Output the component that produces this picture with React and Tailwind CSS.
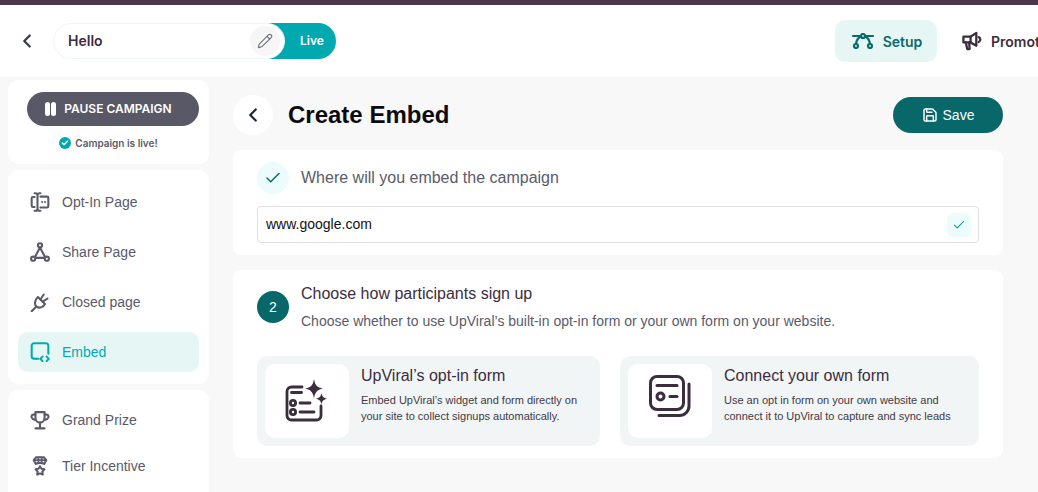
import React from "react";
import { ChevronLeft, Pencil, Save, Check } from "lucide-react";

const arial = "[font-family:'Liberation_Sans',Arial,sans-serif]";

const S = ({ children, size = 20, className = "" }) => (
  <svg width={size} height={size} viewBox="0 0 24 24" fill="none" stroke="currentColor" strokeWidth="2.500" strokeLinecap="round" strokeLinejoin="round" className={className}>
    {children}
  </svg>
);

const OptIn = () => (
  <S>
    <path d="M5.500 6H3.500A1.500 1.500 0 0 0 2 7.500v9A1.500 1.500 0 0 0 3.500 18h2" />
    <path d="M12.500 5.500h8A1.500 1.500 0 0 1 22 7v10a1.500 1.500 0 0 1-1.500 1.500h-8" />
    <path d="M5.500 1.500h1a2.500 2.500 0 0 1 2.500 2.500v16a2.500 2.500 0 0 1-2.500 2.500h-1M12.500 1.500h-1A2.500 2.500 0 0 0 9 4M12.500 22.500h-1A2.500 2.500 0 0 1 9 20" />
    <path d="M14.500 12h.01M18 12h.01" />
  </S>
);
const Share = () => (
  <S>
    <circle cx="12" cy="4" r="2.500" />
    <circle cx="3.800" cy="20" r="2.500" />
    <circle cx="20.200" cy="20" r="2.500" />
    <path d="M12 6.500 6 18M12 6.500 18 18M6.300 19h11.400" />
  </S>
);
const Plug = () => (
  <S>
    <path d="M2 23l4.500-4.500" />
    <path d="M9.500 6 18 14.500c-1.500 3-6 5.500-9.500 3.500C5 16 5 10 9.500 6Z" />
    <path d="M12.500 9 16.500 3M15 11.500l6-3.500" />
  </S>
);
const EmbedI = () => (
  <S>
    <path d="M10 20H5a3 3 0 0 1-3-3V4.500a3 3 0 0 1 3-3h14a3 3 0 0 1 3 3V14" />
    <path d="M7 20h.01" />
    <path d="M15 17.500 12.500 20.250 15 23M20 17.500l2.500 2.750L20 23" />
  </S>
);
const TrophyI = () => (
  <S>
    <path d="M6.500 2.500h11v7a5.500 5.500 0 0 1-11 0Z" />
    <path d="M6.500 5.500H4a2.500 2.500 0 0 0-2 3.500 4 4 0 0 0 4.500 2.500M17.500 5.500H20a2.500 2.500 0 0 1 2 3.500 4 4 0 0 1-4.500 2.500" />
    <path d="M12 15v6.500M6.500 22h11" />
  </S>
);
const Medal = () => (
  <S>
    <path d="M7 9.500 4.500 5 7.500 1.500h9L19.500 5 17 9.500c-3-1.500-7-1.500-10 0Z" />
    <path d="M10 2v6M14 2v6M4.500 5h15" strokeWidth="2" />
    <path d="M12 12.500l1.800 2.800 3.500.7-2.400 2.600.4 3.700-3.300-1.500-3.300 1.500.4-3.700-2.400-2.600 3.500-.7Z" />
  </S>
);
const Nodes = () => (
  <svg width="22" height="16" viewBox="0 0 22 16" fill="none" stroke="currentColor" strokeWidth="2.200" strokeLinecap="round" strokeLinejoin="round">
    <circle cx="11" cy="3" r="2" />
    <circle cx="4" cy="13" r="2" />
    <circle cx="18" cy="13" r="2" />
    <path d="M1 3h8M13 3h8M9 3.500C6.500 4.500 4.500 7 4 11M13 3.500c2.500 1 4.500 3.500 5 7.500" />
  </svg>
);
const Mega = () => (
  <svg width="21" height="20" viewBox="0 0 22 20" fill="none" stroke="currentColor" strokeWidth="2.400" strokeLinecap="round" strokeLinejoin="round">
    <path d="M1.500 5.500H9L15 1.500V15L9 11.500H1.500Z" />
    <path d="M9 5.500v6M4 11.500 5.500 18.500h2.500L7.500 11.500" />
    <path d="M17.500 6c2 .6 2.500 3.800 0 5" />
  </svg>
);
const FormSpark = () => (
  <svg width="44" height="44" viewBox="0 0 44 44" fill="none" stroke="#3b2d3d" strokeWidth="2.800" strokeLinecap="round" strokeLinejoin="round">
    <path d="M17 8H6.500A4.500 4.500 0 0 0 2 12.500v24A4.500 4.500 0 0 0 6.500 41h25a4.500 4.500 0 0 0 4.500-4.500V27" />
    <path d="M6.500 13.500h10" />
    <circle cx="8" cy="24" r="2.600" />
    <circle cx="8" cy="33" r="2.600" />
    <path d="M15 24H25M15 33H29" />
    <path fill="#3b2d3d" stroke="none" d="M29 0c1 6 3 8.500 9 9.500C32 11 30 13 29 19.500c-1-6.500-3-8.500-9-10C26 8.500 28 6 29 0Z" />
    <path fill="#3b2d3d" stroke="none" d="M36.500 14c.7 3.500 2 5 5.800 5.700-3.800.8-5.100 2.200-5.800 5.800-.7-3.600-2-5-5.800-5.800 3.800-.7 5.100-2.200 5.800-5.700Z" />
  </svg>
);
const FormStack = () => (
  <svg width="42" height="42" viewBox="0 0 42 42" fill="none" stroke="#3b2d3d" strokeWidth="3" strokeLinecap="round" strokeLinejoin="round" className="mb-[10px]">
    <rect x="1.500" y="1.500" width="33" height="33" rx="6.500" />
    <path d="M8 10.500h20" />
    <circle cx="11.500" cy="21.500" r="3.500" />
    <path d="M21 21.500h7" />
    <path d="M40 9v22a9.500 9.500 0 0 1-9.500 9.500H10" />
  </svg>
);

const NavItem = ({ icon, label, active, h = "h-10" }) => (
  <div className={`flex items-center gap-3 rounded-[10px] pl-3 text-sm ${h} ${active ? "bg-[#e6f6f5] text-[#00acb4]" : "text-[#5a5a69]"}`}>
    {icon}
    <span>{label}</span>
  </div>
);

const Option = ({ icon, title, lines, className }) => (
  <div className={`flex gap-3 rounded-[10px] bg-[#f2f5f6] p-2 ${className}`}>
    <div className="flex h-[74px] w-[84px] items-center justify-center rounded-[10px] bg-white">{icon}</div>
    <div className="pt-[2px] text-[#3e3a46]">
      <div className="text-base leading-[20px] text-[#3b2d3d]">{title}</div>
      <div className="mt-[6px] text-[11px] leading-4">
        {lines.map((l) => (<div key={l}>{l}</div>))}
      </div>
    </div>
  </div>
);

export default function App() {
  return (
    <div className={`flex h-[492px] w-[1038px] flex-col overflow-hidden bg-[#f8f8f8] ${arial}`}>
      <div className="h-[5px] shrink-0 bg-[#4b3749]" />
      <header className="flex h-[72px] shrink-0 items-center bg-white">
        <ChevronLeft size={22} strokeWidth={2.400} className="ml-4 text-[#2e3a4e]" />
        <div className="ml-[15px] flex h-9 w-[283px] font-['Inter',sans-serif]">
          <div className="relative z-10 flex h-9 w-[232px] shrink-0 items-center justify-between rounded-full border border-[#eef5f5] bg-white pl-[14px] pr-[4px]">
            <span className="text-sm font-semibold text-[#3b2d3d]">Hello</span>
            <span className="flex h-[30px] w-[30px] items-center justify-center rounded-full bg-[#f6f6f6]">
              <Pencil size={16} strokeWidth={1.700} className="text-[#6f7480]" />
            </span>
          </div>
          <span className="-ml-[30px] flex h-9 flex-1 items-center rounded-r-full bg-[#00a9b0] pl-[45px] text-xs font-semibold text-white">Live</span>
        </div>
        <div className="ml-auto flex items-center gap-[25px] overflow-hidden font-['Inter',sans-serif]">
          <div className="flex h-[42px] w-[102px] items-center justify-center gap-[9px] rounded-[10px] bg-[#e6f6f5] pl-[2px] text-sm font-semibold text-[#0a6a6b]">
            <Nodes />
            <span className="pt-[1px]">Setup</span>
          </div>
          <div className="flex w-[76px] items-center gap-[8px] text-sm font-semibold text-[#3b2d3d]">
            <span className="shrink-0"><Mega /></span>
            <span className="pt-[1px]">Promote</span>
          </div>
        </div>
      </header>
      <div className="flex min-h-0 flex-1 pt-[3px]">
        <aside className="ml-2 flex w-[201px] shrink-0 flex-col gap-[6px]">
          <div className="flex h-[84px] flex-col items-center rounded-[10px] bg-white pt-3 font-['Inter',sans-serif]">
            <div className="ml-[9px] flex h-[34px] w-[172px] items-center justify-center gap-[8px] rounded-full bg-[#585866] pr-[9px] text-xs font-semibold text-white">
              <span className="flex gap-[1px]">
                <span className="h-[14px] w-[5px] rounded-full bg-white" />
                <span className="h-[14px] w-[5px] rounded-full bg-white" />
              </span>
              <span>PAUSE CAMPAIGN</span>
            </div>
            <div className="mt-[10px] flex items-center gap-[4px] text-[10px] font-semibold text-[#5a5a69]">
              <span className="mb-[2px] flex h-3 w-3 items-center justify-center rounded-full bg-[#00a9b0]">
                <Check size={8} strokeWidth={4} className="text-white" />
              </span>
              <span>Campaign is live!</span>
            </div>
          </div>
          <nav className="flex flex-col gap-[10px] rounded-[10px] bg-white px-[10px] py-3">
            <NavItem icon={<OptIn />} label="Opt-In Page" />
            <NavItem icon={<Share />} label="Share Page" />
            <NavItem icon={<Plug />} label="Closed page" />
            <NavItem icon={<EmbedI />} label="Embed" active />
          </nav>
          <nav className="flex flex-1 flex-col gap-[6px] rounded-t-[10px] bg-white px-[10px] pt-[10px]">
            <NavItem icon={<TrophyI />} label="Grand Prize" />
            <NavItem icon={<Medal />} label="Tier Incentive" />
          </nav>
        </aside>
        <main className="ml-6 w-[770px] shrink-0">
          <div className="flex h-[70px] items-center">
            <span className="flex h-10 w-10 items-center justify-center rounded-full bg-white">
              <ChevronLeft size={22} strokeWidth={2.400} className="text-[#1d2433]" />
            </span>
            <h1 className="ml-[15px] text-2xl font-bold text-[#0b0b10]">Create Embed</h1>
            <button className="ml-auto flex h-9 w-[110px] items-center justify-center gap-[5px] rounded-full bg-[#076769] text-sm text-white">
              <Save size={16} strokeWidth={2.200} />
              Save
            </button>
          </div>
          <section className="h-[105px] rounded-[8px] bg-white px-6 pt-3">
            <div className="flex items-center gap-3">
              <span className="flex h-8 w-8 items-center justify-center rounded-full bg-[#ecfbfb]">
                <Check size={18} strokeWidth={2} className="text-[#0a6a6b]" />
              </span>
              <span className="text-base text-[#5a5b6a]">Where will you embed the campaign</span>
            </div>
            <div className="mt-3 flex h-[37px] items-center justify-between rounded-[4px] border border-[#dfdfdf] pl-2 pr-[7px] text-sm text-[#111]">
              <span className="mb-[2px]">www.google.com</span>
              <span className="flex h-6 w-6 items-center justify-center rounded-[6px] bg-[#ecfbfb]">
                <Check size={14} strokeWidth={1.800} className="text-[#00939b]" />
              </span>
            </div>
          </section>
          <section className="mt-[15px] h-[188px] rounded-[8px] bg-white px-6 pt-[14px]">
            <div className="flex items-start gap-3">
              <span className="mt-[7px] flex h-8 w-8 shrink-0 items-center justify-center rounded-full bg-[#076769] text-sm text-white">2</span>
              <div>
                <div className="text-base leading-[20px] text-[#3b2d3d]">Choose how participants sign up</div>
                <div className="mt-[7px] text-sm leading-[20px] text-[#5a5b6a]">Choose whether to use UpViral’s built-in opt-in form or your own form on your website.</div>
              </div>
            </div>
            <div className="mt-[25px] flex gap-5">
              <Option className="w-[343px]" icon={<FormSpark />} title="UpViral’s opt-in form" lines={["Embed UpViral’s widget and form directly on", "your site to collect signups automatically."]} />
              <Option className="flex-1" icon={<FormStack />} title="Connect your own form" lines={["Use an opt in form on your own website and", "connect it to UpViral to capture and sync leads"]} />
            </div>
          </section>
        </main>
      </div>
    </div>
  );
}
